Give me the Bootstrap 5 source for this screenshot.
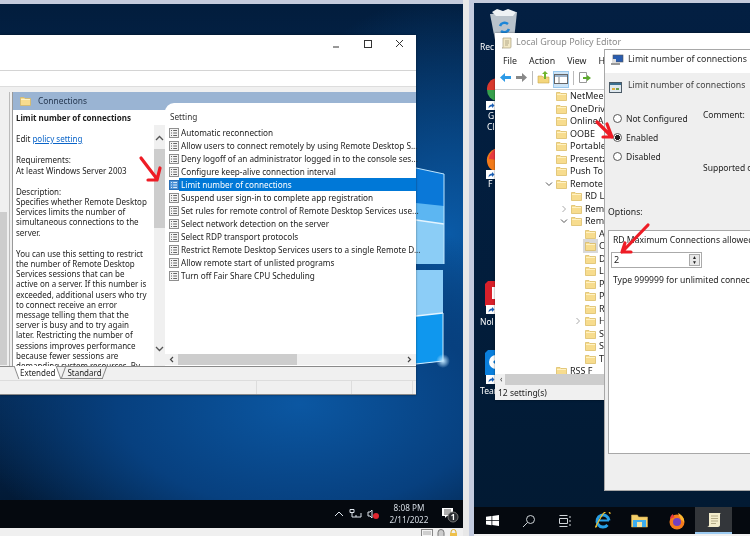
<!DOCTYPE html>
<html lang="en">
<head>
<meta charset="UTF-8">
<title>Limit number of connections</title>
<link href="https://cdn.jsdelivr.net/npm/bootstrap@5.3.0/dist/css/bootstrap.min.css" rel="stylesheet">
<style>
html, body { margin: 0; width: 750px; height: 536px; overflow: hidden; background: #f0f0f0; }
body { font-family: "Noto Sans", "Liberation Sans", sans-serif; font-size: 8px; line-height: 10.2px; color: #222; }
.screen { width: 750px; height: 536px; overflow: hidden; filter: blur(.4px); }
.top-strip { height: 4px; background: #c4cbdc; }
.desk { top: 4px; height: 496px; overflow: hidden; }
.desk-left { left: 0; width: 463px; background: radial-gradient(ellipse 330px 190px at 300px 400px, #0b57a2 0%, #07407f 55%, transparent 100%), radial-gradient(ellipse 200px 240px at 450px 230px, #0a5aa6 0%, transparent 100%), linear-gradient(#021d3d, #052e5e 45%, #052c59 75%, #021a36); }
.desk-right { left: 474px; width: 276px; top: 3px; height: 504px; background: linear-gradient(#031f42, #021d3b 60%, #021a33); }
.gap-a { left: 463px; top: 0; width: 6px; height: 536px; background: #e8e8e8; }
.gap-b { left: 469px; top: 0; width: 5px; height: 536px; background: #c3cbdf; }
.logo { left: 416px; top: 160px; }
.win { background: #fff; box-shadow: 0 0 2px rgba(0,0,0,.5); }
.win-left { left: 0; top: 35px; width: 416px; height: 360px; }
.title-bar { flex: none; height: 36px; padding: 3px 13px 0 0; border-bottom: 1px solid #d4d4d4; }
.addr { flex: none; height: 16px; border-bottom: 1px solid #ddd; }
.work { flex: 1 1 0; background: #f0f0f0; padding-top: 5px; min-height: 0; }
.tree-stub { width: 10px; background: #f0f0f0; border-right: 1px solid #bbb; color: #555; font-size: 7px; padding-top: 4px; }
.tree-stub .thumb { width: 7px; height: 153px; margin-top: 116px; background: #cdcdcd; }
.panel { width: 404px; margin-left: 2px; border-left: 1px solid #999; min-height: 0; background: #fff; }
.panel-head { flex: none; height: 18px; background: #9ab4d3; padding: 4px 0 0 7px; color: #24364e; font-size: 8.4px; gap: 7px; }
.panel-body { flex: 1 1 0; min-height: 0; }
.desc { width: 141px; flex: none; padding: 3px 0 0 3px; overflow: hidden; white-space: nowrap; color: #1c1c1c; }
.desc p { margin: 0 0 11px; }
.desc a { color: #0a64c8; }
.vscroll { width: 11px; flex: none; background: #f0f0f0; margin-top: 15px; position: relative; }
.vscroll .thumb { height: 79px; background: #cdcdcd; margin-top: 24px; }
.vscroll svg { position: absolute; left: 1px; }
.settings { flex: 1; margin-top: -7px; border-top-left-radius: 9px; background: #fff; padding: 9px 0 0 4px; min-width: 0; position: relative; font-size: 8.2px; }
.settings .hd { padding-left: 1px; height: 14px; color: #333; }
.set-row { height: 13px; line-height: 13px; white-space: nowrap; }
.set-row svg { flex: none; }
.set-row span { flex: 1; padding-left: 2px; }
.set-row.active span { background: #0078d7; color: #fff; }
.hscroll { height: 11px; background: #f0f0f0; position: absolute; left: 0; right: 0; top: 251px; }
.hscroll .thumb { width: 119px; height: 100%; background: #cdcdcd; margin-left: 13px; }
.hscroll svg { position: absolute; top: 2px; }
.tabs { flex: none; height: 14px; background: #f0f0f0; border-top: 1px solid #8a8a8a; padding-left: 16px; gap: 4px; }
.tab { position: relative; padding: 1px 4px 0; z-index: 0; height: 12px; }
.tab::before { content: ""; position: absolute; inset: -1px 0 0; z-index: -1; border: 1px solid #888; border-width: 0 1px 1px; transform: skewX(-20deg); }
.tab.first::before { transform: skewX(20deg); border-bottom: 0; background: #fff; }
.status { flex: none; height: 15px; background: #f0f0f0; border-top: 1px solid #ddd; border-bottom: 1px solid #8a8a8a; }
.status i { border-right: 1px solid #ddd; display: block; }
.taskbar { background: #05090f; }
.taskbar-left { left: 0; top: 500px; width: 463px; height: 28px; color: #dfe6ee; }
.tray { font-size: 8.2px; line-height: 12.5px; text-align: center; color: #d6dde5; width: 42px; margin: 0 11px 0 7px; }
.strip-icons { left: 421px; top: 529px; gap: 4px; }
.taskbar-right { left: 474px; top: 507px; width: 276px; height: 27px; }
.tb-btn { width: 37px; height: 27px; flex: none; }
.tb-start { width: 36px; }
.tb-active { background: #33363a; border-bottom: 2px solid #9ccaf0; }
.dicon { color: #fff; font-size: 8.5px; line-height: 10px; white-space: nowrap; }
.win-gpe { left: 495px; top: 33px; width: 255px; height: 367px; background: #fff; }
.gpe-title { flex: none; height: 20px; padding: 4px 0 0 6px; gap: 4px; color: #8b8b8b; font-size: 9px; white-space: nowrap; }
.gpe-menu { flex: none; height: 16px; padding-left: 8px; gap: 12px; font-size: 8.8px; color: #222; white-space: nowrap; }
.gpe-tools { flex: none; height: 21px; padding: 2px 0 0 4px; gap: 3px; border-bottom: 1px solid #d0d0d0; }
.tool-sep { width: 1px; height: 14px; background: #bbb; margin: 0 1px; }
.tool-on { background: #cce4f7; border: 1px solid #99c9ef; height: 17px; }
.tree { flex: 1 1 0; overflow: hidden; }
.tree-row { height: 12.5px; line-height: 12.5px; font-size: 9px; white-space: nowrap; gap: 3px; }
.tree-row svg { flex: none; }
.tree-row.sel svg.f { background: #d9d9d9; outline: 2px solid #d9d9d9; }
.l1 { padding-left: 61px; } .l2 { padding-left: 76px; } .l3 { padding-left: 90px; }
.chev { width: 8px; margin-left: -11px; }
.gpe-scroll { flex: none; height: 11px; background: #f0f0f0; color: #333; font-size: 8px; padding-left: 5px; }
.gpe-scroll .thumb { flex: 1; background: #cdcdcd; height: 100%; margin-left: 3px; }
.gpe-status { flex: none; height: 15px; padding: 3px 0 0 3px; background: #f0f0f0; font-size: 8.5px; }
.dlg { left: 604px; top: 49px; width: 150px; height: 442px; background: #efefef; border: 1px solid #a8a8a8; border-right: 0; font-size: 8.5px; white-space: nowrap; }
.dlg-title { flex: none; height: 23px; background: #fff; padding: 4px 0 0 6px; gap: 4px; color: #2b2b2b; font-size: 8.8px; }
.dlg-head { flex: none; height: 30px; padding: 8px 0 0 4px; gap: 6px; overflow: hidden; color: #444; font-size: 8.7px; }
.dlg-head span { margin-top: -1px; }
.dlg-cols { flex: none; height: 96px; padding: 10px 0 0 7px; }
.radio-col { width: 91px; flex: none; }
.form-check { min-height: 0; padding: 0 0 0 14px; margin: 0 0 8px; line-height: 11px; }
.form-check-input { width: 9px; height: 9px; margin: 1px 0 0 -13px; border: 1px solid #555; background-color: #fff; }
.form-check-input:checked { background-color: #fff; border-color: #555; background-image: radial-gradient(circle, #222 0 2.4px, transparent 2.6px); }
.comment { margin-top: -3px; }
.supported { margin-top: 43px; }
.opt-label { flex: none; padding: 8px 0 0 3px; height: 31px; font-size: 8.7px; }
.opt-box { flex: none; margin-left: 3px; height: 224px; background: #fff; border: 1px solid #a8a8a8; border-right: 0; padding: 4px 0 0 4px; font-size: 8.6px; }
.spin-box { width: 91px; height: 16px; border: 1px solid #aaa; margin: 7px 0 7px -2px; padding-left: 2px; background: #fff; font-size: 9px; }
.spin-box .spin { width: 11px; height: 12px; background: #e8e8e8; border: 1px solid #aaa; margin-right: 1px; font-size: 5px; line-height: 5px; text-align: center; color: #222; }
.arrow { left: 0; top: 0; pointer-events: none; }
</style>
</head>
<body>
<svg width="0" height="0" class="position-absolute">
  <symbol id="row" viewBox="0 0 10 10"><rect x=".5" y=".5" width="9" height="9" fill="#f4f4f4" stroke="#8f8f8f"/><path d="M2 2.500h1M2 5h1M2 7.500h1M4.200 2.500h3.800M4.200 5h3.800M4.200 7.500h3.800" stroke="#555" stroke-width=".9"/></symbol>
  <symbol id="rowsel" viewBox="0 0 10 10"><rect x=".5" y=".5" width="9" height="9" fill="#4f94d8" stroke="#2b6eb4"/><path d="M2 2.500h1M2 5h1M2 7.500h1M4.200 2.500h3.800M4.200 5h3.800M4.200 7.500h3.800" stroke="#e8f2fb" stroke-width=".9"/></symbol>
  <symbol id="folder" viewBox="0 0 11 10"><path d="M.5 1.500h3.500l1 1h5.500v7h-10z" fill="#f7dc8e" stroke="#d9b75c" stroke-width=".7"/><path d="M1 3.500h9" stroke="#fff2c4"/></symbol>
  <symbol id="short" viewBox="0 0 10 9"><rect width="10" height="9" fill="#fff"/><path d="M2.500 7.500c0-3 1.500-4 3.500-4V2l2.500 2.500L6 7V5.500c-1.500 0-2.500.5-3.500 2z" fill="#1b5fb5"/></symbol>
</svg>

<div class="screen position-relative">
  <div class="top-strip"></div>

  <!-- left desktop -->
  <div class="desk desk-left position-absolute">
    <svg class="logo position-absolute" width="47" height="216" viewBox="0 0 47 216">
      <defs><radialGradient id="glow"><stop offset="0" stop-color="#bfe6ff"/><stop offset="1" stop-color="#bfe6ff" stop-opacity="0"/></radialGradient></defs>
      <path d="M0 4L28 10V100H0z" fill="#0a78d8"/>
      <path d="M0 39L28 42V100H0z" fill="#5cb6f2"/>
      <path d="M0 56L28 60V100H0z" fill="#8bcdf6"/>
      <path d="M0 56L28 60" stroke="#e4f4ff" stroke-width="1.500"/>
      <path d="M0 4L28 10V100" fill="none" stroke="#bfe6ff"/>
      <path d="M0 106H27V197L0 200z" fill="#8ccdf7"/>
      <path d="M0 152L27 149V197L0 200z" fill="#0f97ee"/>
      <path d="M0 152L27 149" stroke="#e4f4ff" stroke-width="1.500"/>
      <path d="M27 149V197L0 200" fill="none" stroke="#cfecff"/>
      <circle cx="27" cy="197" r="7" fill="url(#glow)"/>
    </svg>
  </div>

  <div class="win win-left position-absolute d-flex flex-column">
    <div class="title-bar d-flex justify-content-end">
      <svg width="80" height="14" viewBox="0 0 80 14"><path d="M10 9h6" stroke="#333"/><rect x="41.500" y="2.500" width="7" height="7" fill="none" stroke="#333"/><path d="M73 2l7 7M80 2l-7 7" stroke="#333"/></svg>
    </div>
    <div class="addr"></div>
    <div class="work d-flex">
      <div class="tree-stub"><div class="thumb"></div></div>
      <div class="panel d-flex flex-column">
        <div class="panel-head d-flex">
          <svg width="11" height="10"><use href="#folder"/></svg><span>Connections</span>
        </div>
        <div class="panel-body d-flex">
          <div class="desc">
            <p class="fw-bold">Limit number of connections</p>
            <p>Edit <a href="#">policy setting </a></p>
            <p>Requirements:<br>At least Windows Server 2003</p>
            <p>Description:<br>Specifies whether Remote Desktop<br>Services limits the number of<br>simultaneous connections to the<br>server.</p>
            <p>You can use this setting to restrict<br>the number of Remote Desktop<br>Services sessions that can be<br>active on a server. If this number is<br>exceeded, additional users who try<br>to connect receive an error<br>message telling them that the<br>server is busy and to try again<br>later. Restricting the number of<br>sessions improves performance<br>because fewer sessions are<br>demanding system resources. By</p>
          </div>
          <div class="vscroll">
            <svg style="top:10px" width="9" height="6" viewBox="0 0 9 6"><path d="M1 5l3.500-3.500L8 5" fill="none" stroke="#555" stroke-width="1.300"/></svg>
            <div class="thumb"></div>
            <svg style="top:221px" width="9" height="6" viewBox="0 0 9 6"><path d="M1 1l3.500 3.500L8 1" fill="none" stroke="#555" stroke-width="1.300"/></svg>
          </div>
          <div class="settings">
            <div class="hd">Setting</div>
            <div class="set-row d-flex align-items-center"><svg width="10" height="10"><use href="#row"/></svg><span>Automatic reconnection</span></div>
            <div class="set-row d-flex align-items-center"><svg width="10" height="10"><use href="#row"/></svg><span>Allow users to connect remotely by using Remote Desktop S...</span></div>
            <div class="set-row d-flex align-items-center"><svg width="10" height="10"><use href="#row"/></svg><span>Deny logoff of an administrator logged in to the console ses...</span></div>
            <div class="set-row d-flex align-items-center"><svg width="10" height="10"><use href="#row"/></svg><span>Configure keep-alive connection interval</span></div>
            <div class="set-row active d-flex align-items-center"><svg width="10" height="10"><use href="#rowsel"/></svg><span>Limit number of connections</span></div>
            <div class="set-row d-flex align-items-center"><svg width="10" height="10"><use href="#row"/></svg><span>Suspend user sign-in to complete app registration</span></div>
            <div class="set-row d-flex align-items-center"><svg width="10" height="10"><use href="#row"/></svg><span>Set rules for remote control of Remote Desktop Services use...</span></div>
            <div class="set-row d-flex align-items-center"><svg width="10" height="10"><use href="#row"/></svg><span>Select network detection on the server</span></div>
            <div class="set-row d-flex align-items-center"><svg width="10" height="10"><use href="#row"/></svg><span>Select RDP transport protocols</span></div>
            <div class="set-row d-flex align-items-center"><svg width="10" height="10"><use href="#row"/></svg><span>Restrict Remote Desktop Services users to a single Remote D...</span></div>
            <div class="set-row d-flex align-items-center"><svg width="10" height="10"><use href="#row"/></svg><span>Allow remote start of unlisted programs</span></div>
            <div class="set-row d-flex align-items-center"><svg width="10" height="10"><use href="#row"/></svg><span>Turn off Fair Share CPU Scheduling</span></div>
            <div class="hscroll d-flex">
              <svg style="left:4px" width="5" height="7" viewBox="0 0 5 7"><path d="M4 1L1.500 3.500 4 6" fill="none" stroke="#444" stroke-width="1.200"/></svg>
              <div class="thumb"></div>
              <svg style="right:4px" width="5" height="7" viewBox="0 0 5 7"><path d="M1 1l2.500 2.500L1 6" fill="none" stroke="#444" stroke-width="1.200"/></svg>
            </div>
          </div>
        </div>
      </div>
    </div>
    <div class="tabs d-flex">
      <span class="tab first">Extended</span><span class="tab">Standard</span>
    </div>
    <div class="status d-flex">
      <i style="width:257px"></i><i style="width:95px"></i><i style="width:61px"></i>
    </div>
  </div>

  <div class="taskbar taskbar-left position-absolute d-flex justify-content-end align-items-center">
    <svg width="46" height="12" viewBox="0 0 46 12"><path d="M0 8l4-4 4 4" fill="none" stroke="#dfe6ee"/><path d="M15 1.500h4v3h-4zM17 4.500V9h9M21 9v-2M26 9V5" fill="none" stroke="#dfe6ee"/><path d="M33 4h2l2-2v8l-2-2h-2z" fill="none" stroke="#dfe6ee"/><circle cx="41" cy="8" r="3" fill="#e0262e"/></svg>
    <div class="tray">8:08 PM<br>2/11/2022</div>
    <svg class="me-1" width="18" height="17" viewBox="0 0 18 17"><path d="M1 2h11v8H6l-2 2v-2H1z" fill="#fff"/><path d="M3 4h7M3 6h7M3 8h5" stroke="#333" stroke-width=".8"/><circle cx="12" cy="11" r="5" fill="#2c2f33" stroke="#777"/><text x="12" y="14" text-anchor="middle" font-size="8" font-weight="700" fill="#fff" font-family="Noto Sans, sans-serif">1</text></svg>
  </div>
  <div class="strip-icons position-absolute d-flex">
    <svg width="12" height="7" viewBox="0 0 12 7"><rect x=".5" y=".5" width="11" height="9" fill="#f4f4f4" stroke="#888"/><path d="M2 3h8M2 5h8" stroke="#aaa"/></svg>
    <svg width="8" height="7" viewBox="0 0 8 7"><rect x="1" y=".5" width="6" height="9" rx="3" fill="#ccc" stroke="#777"/></svg>
    <svg width="9" height="7" viewBox="0 0 9 7"><path d="M2 4V3a2.500 2.500 0 0 1 5 0v1" fill="none" stroke="#d8a92c"/><rect x="1" y="4" width="7" height="5" fill="#eec04a"/></svg>
  </div>

  <div class="gap-a position-absolute"></div>
  <div class="gap-b position-absolute"></div>

  <!-- right desktop -->
  <div class="desk desk-right position-absolute">
    <svg class="position-absolute" style="left:15px;top:5px" width="30" height="34" viewBox="0 0 30 34"><path d="M1 6l27-2-3 28H6z" fill="#b9c3cc"/><path d="M3 4l5-3 6 2 5-2 8 3-3 4H7z" fill="#eef2f5"/><path d="M11 18a5 5 0 0 1 8-2M20 21a5 5 0 0 1-8 2" fill="none" stroke="#1c86d8" stroke-width="2.500"/></svg>
    <div class="dicon position-absolute" style="left:6px;top:39px">Rec</div>
    <svg class="position-absolute" style="left:11px;top:75px" width="12" height="34" viewBox="0 0 12 34"><path d="M12 0A11 11 0 0 0 2 12h10z" fill="#d9392d"/><path d="M2 12a11 11 0 0 0 10 11V12z" fill="#37a04c"/><use href="#short" x="1" y="23" width="10" height="9"/></svg>
    <div class="dicon position-absolute" style="left:14px;top:108px">G</div>
    <div class="dicon position-absolute" style="left:13px;top:119px">Cl</div>
    <svg class="position-absolute" style="left:11px;top:145px" width="12" height="34" viewBox="0 0 12 34"><path d="M12 0C5 2 1 8 2 14c1 6 5 9 10 9z" fill="#f27a1a"/><path d="M12 0C8 2 4 6 4 11l8 1z" fill="#e93a3f"/><use href="#short" x="1" y="22" width="10" height="9"/></svg>
    <div class="dicon position-absolute" style="left:14px;top:176px">F</div>
    <svg class="position-absolute" style="left:11px;top:278px" width="12" height="36" viewBox="0 0 12 36"><path d="M12 0H3L0 3v22h12z" fill="#d8202a"/><rect x="7" y="6" width="5" height="12" fill="#fff"/><use href="#short" x="1" y="24" width="10" height="9"/></svg>
    <div class="dicon position-absolute" style="left:6px;top:314px">Nol</div>
    <svg class="position-absolute" style="left:11px;top:347px" width="12" height="36" viewBox="0 0 12 36"><path d="M12 0H3L0 3v22h12z" fill="#0a7fdc"/><circle cx="11" cy="12" r="7" fill="#fff"/><path d="M12 8l-4 4 4 4" fill="#0a7fdc"/><use href="#short" x="1" y="25" width="10" height="9"/></svg>
    <div class="dicon position-absolute" style="left:6px;top:383px">Tean</div>
  </div>

  <div class="win win-gpe position-absolute d-flex flex-column">
    <div class="gpe-title d-flex">
      <svg width="11" height="12" viewBox="0 0 11 12"><path d="M2 1h8v9c0 1-1 1-2 1H1c1 0 1-1 1-2z" fill="#f1e7c4" stroke="#a89e80" stroke-width=".7"/><path d="M4 4h4M4 6h4M4 8h3" stroke="#9a9072" stroke-width=".7"/></svg>
      <span>Local Group Policy Editor</span>
    </div>
    <div class="gpe-menu d-flex align-items-center"><span>File</span><span>Action</span><span>View</span><span>Help</span></div>
    <div class="gpe-tools d-flex align-items-start">
      <svg width="13" height="13" viewBox="0 0 13 13"><path d="M1 6.500L6 2v3h6v3H6v3z" fill="#2d9ae6"/></svg>
      <svg width="13" height="13" viewBox="0 0 13 13"><path d="M12 6.500L7 2v3H1v3h6v3z" fill="#888"/></svg>
      <span class="tool-sep"></span>
      <svg width="13" height="13" viewBox="0 0 13 13"><path d="M1 5h4l1 1h6v6H1z" fill="#f4d67c" stroke="#c9a84f" stroke-width=".6"/><path d="M7 8V3H5l3-3 3 3H9v5z" fill="#6fb52c"/></svg>
      <span class="tool-on d-flex"><svg width="14" height="13" viewBox="0 0 14 13"><rect x=".5" y="2.500" width="13" height="9" fill="#fff" stroke="#666"/><path d="M1 3h12v2H1z" fill="#9cb4cc"/><path d="M5 5v6" stroke="#888"/></svg></span>
      <span class="tool-sep"></span>
      <svg width="13" height="13" viewBox="0 0 13 13"><path d="M1.500 1.500h7v10h-7z" fill="#fff" stroke="#999"/><path d="M5 6h4V4l4 3-4 3V8H5z" fill="#5cab2c"/></svg>
    </div>
    <div class="tree">
      <div class="tree-row l1 d-flex align-items-center"><svg class="f" width="11" height="10"><use href="#folder"/></svg>NetMee</div>
      <div class="tree-row l1 d-flex align-items-center"><svg class="f" width="11" height="10"><use href="#folder"/></svg>OneDriv</div>
      <div class="tree-row l1 d-flex align-items-center"><svg class="f" width="11" height="10"><use href="#folder"/></svg>OnlineA</div>
      <div class="tree-row l1 d-flex align-items-center"><svg class="f" width="11" height="10"><use href="#folder"/></svg>OOBE</div>
      <div class="tree-row l1 d-flex align-items-center"><svg class="f" width="11" height="10"><use href="#folder"/></svg>Portable</div>
      <div class="tree-row l1 d-flex align-items-center"><svg class="f" width="11" height="10"><use href="#folder"/></svg>Presentz</div>
      <div class="tree-row l1 d-flex align-items-center"><svg class="f" width="11" height="10"><use href="#folder"/></svg>Push To</div>
      <div class="tree-row l1 d-flex align-items-center"><svg class="chev" width="8" height="8" viewBox="0 0 8 8"><path d="M1 2.500l3 3 3-3" fill="none" stroke="#555"/></svg><svg class="f" width="11" height="10"><use href="#folder"/></svg>Remote</div>
      <div class="tree-row l2 d-flex align-items-center"><svg class="f" width="11" height="10"><use href="#folder"/></svg>RD L</div>
      <div class="tree-row l2 d-flex align-items-center"><svg class="chev" width="8" height="8" viewBox="0 0 8 8"><path d="M2.500 1l3 3-3 3" fill="none" stroke="#aaa"/></svg><svg class="f" width="11" height="10"><use href="#folder"/></svg>Rem</div>
      <div class="tree-row l2 d-flex align-items-center"><svg class="chev" width="8" height="8" viewBox="0 0 8 8"><path d="M1 2.500l3 3 3-3" fill="none" stroke="#555"/></svg><svg class="f" width="11" height="10"><use href="#folder"/></svg>Rem</div>
      <div class="tree-row l3 d-flex align-items-center"><svg class="f" width="11" height="10"><use href="#folder"/></svg>A</div>
      <div class="tree-row sel l3 d-flex align-items-center"><svg class="f" width="11" height="10"><use href="#folder"/></svg>C</div>
      <div class="tree-row l3 d-flex align-items-center"><svg class="f" width="11" height="10"><use href="#folder"/></svg>D</div>
      <div class="tree-row l3 d-flex align-items-center"><svg class="f" width="11" height="10"><use href="#folder"/></svg>L</div>
      <div class="tree-row l3 d-flex align-items-center"><svg class="f" width="11" height="10"><use href="#folder"/></svg>P</div>
      <div class="tree-row l3 d-flex align-items-center"><svg class="f" width="11" height="10"><use href="#folder"/></svg>P</div>
      <div class="tree-row l3 d-flex align-items-center"><svg class="f" width="11" height="10"><use href="#folder"/></svg>R</div>
      <div class="tree-row l3 d-flex align-items-center"><svg class="chev" width="8" height="8" viewBox="0 0 8 8"><path d="M2.500 1l3 3-3 3" fill="none" stroke="#aaa"/></svg><svg class="f" width="11" height="10"><use href="#folder"/></svg>H</div>
      <div class="tree-row l3 d-flex align-items-center"><svg class="f" width="11" height="10"><use href="#folder"/></svg>S</div>
      <div class="tree-row l3 d-flex align-items-center"><svg class="f" width="11" height="10"><use href="#folder"/></svg>S</div>
      <div class="tree-row l3 d-flex align-items-center"><svg class="f" width="11" height="10"><use href="#folder"/></svg>T</div>
      <div class="tree-row l1 d-flex align-items-center"><svg class="f" width="11" height="10"><use href="#folder"/></svg>RSS F</div>
    </div>
    <div class="gpe-scroll d-flex align-items-center"><span>&lsaquo;</span><div class="thumb"></div></div>
    <div class="gpe-status">12 setting(s)</div>
  </div>

  <div class="dlg position-absolute d-flex flex-column">
    <div class="dlg-title d-flex">
      <svg width="13" height="12" viewBox="0 0 13 12"><rect x="2" y="1" width="10" height="7" fill="#2a5db0" stroke="#555" stroke-width=".6"/><path d="M0 9h9v2H0z" fill="#999"/><path d="M1 5h4v4H1z" fill="#ddd"/></svg>
      <span>Limit number of connections</span>
    </div>
    <div class="dlg-head d-flex">
      <svg width="13" height="13" viewBox="0 0 13 13"><rect x=".5" y="1.500" width="12" height="10" fill="#dfe8ee" stroke="#4b5a66"/><path d="M1 2h11v2H1z" fill="#3c6f8f"/><path d="M3 7h3v2H3z" fill="#e0b040"/><path d="M7 7h3v2H7z" fill="#6fa050"/></svg>
      <span>Limit number of connections</span>
    </div>
    <div class="dlg-cols d-flex">
      <div class="radio-col">
        <div class="form-check"><input class="form-check-input" type="radio" name="state" id="r1"><label class="form-check-label" for="r1">Not Configured</label></div>
        <div class="form-check"><input class="form-check-input" type="radio" name="state" id="r2" checked><label class="form-check-label" for="r2">Enabled</label></div>
        <div class="form-check"><input class="form-check-input" type="radio" name="state" id="r3"><label class="form-check-label" for="r3">Disabled</label></div>
      </div>
      <div class="d-flex flex-column">
        <span class="comment">Comment:</span>
        <span class="supported">Supported on:</span>
      </div>
    </div>
    <div class="opt-label">Options:</div>
    <div class="opt-box">
      <div>RD Maximum Connections allowed</div>
      <div class="spin-box d-flex align-items-center justify-content-between"><span>2</span><div class="spin">&#9650;<br>&#9660;</div></div>
      <div>Type 999999 for unlimited connections</div>
    </div>
  </div>

  <div class="taskbar taskbar-right position-absolute d-flex align-items-center">
    <div class="tb-btn tb-start d-flex align-items-center justify-content-center"><svg width="13" height="11" viewBox="0 0 13 11"><path d="M0 1.800L5.500 1v4.200H0zM6.300.9L13 0v5.200H6.300zM0 6h5.500v4.200L0 9.400zM6.300 6H13v5l-6.700-.9z" fill="#fff"/></svg></div>
    <div class="tb-btn d-flex align-items-center justify-content-center"><svg width="14" height="14" viewBox="0 0 14 14"><circle cx="8.500" cy="5.500" r="4" fill="none" stroke="#cfd4d8"/><path d="M5.500 8.500L1 13" stroke="#cfd4d8"/></svg></div>
    <div class="tb-btn d-flex align-items-center justify-content-center"><svg width="13" height="12" viewBox="0 0 13 12"><path d="M.5 3.500h8v5h-8zM.5 .5h8M.5 11.500h8M11 1v2M11 5v2M11 9v2" fill="none" stroke="#cfd4d8"/></svg></div>
    <div class="tb-btn d-flex align-items-center justify-content-center"><svg width="18" height="17" viewBox="0 0 18 17"><path d="M15 8.500a6 6 0 1 0-1.500 4.500" fill="none" stroke="#28a0e6" stroke-width="3"/><path d="M4 8.500h11" stroke="#28a0e6" stroke-width="2"/><path d="M3 14C0 17 2 14 7 5s9-5.500 9-3" fill="none" stroke="#f0c030" stroke-width="1.200"/></svg></div>
    <div class="tb-btn d-flex align-items-center justify-content-center"><svg width="17" height="14" viewBox="0 0 17 14"><path d="M.5 1h6l1 2h9v10H.5z" fill="#f4cf6a" stroke="#c9a34b" stroke-width=".6"/><path d="M2 6h13v7H2z" fill="#3dadee"/><path d="M6 8h5v5H6z" fill="#f4e3a2"/></svg></div>
    <div class="tb-btn d-flex align-items-center justify-content-center"><svg width="18" height="18" viewBox="0 0 18 18"><circle cx="9" cy="10" r="7.500" fill="#f47b1c"/><path d="M10 1c4 2 7 5 6 10-.5-2-2-3-3-3-1-3-2-4-3-7z" fill="#fbb731"/><path d="M2 7c0-2 1-4 3-5 0 2 1 3 2 3z" fill="#e93a3f"/><circle cx="9" cy="10" r="4" fill="#7340c0"/></svg></div>
    <div class="tb-btn tb-active d-flex align-items-center justify-content-center"><svg width="16" height="15" viewBox="0 0 16 15"><path d="M3 1h12c-1 0-1 1-1 2v10c0 1-1 2-2 2H1c1 0 2-1 2-2z" fill="#f3eccb"/><path d="M5 4h7M5 6.500h7M5 9h7M5 11.500h5" stroke="#b5ac88"/></svg></div>
  </div>

  <svg class="arrow position-absolute" width="750" height="536" viewBox="0 0 750 536">
    <g fill="none" stroke="#ee1c25" stroke-width="3.200" stroke-linecap="round" stroke-linejoin="round">
      <path d="M141 158L157 179M148 180H157L160 168"/>
      <path d="M597 122L612 137M607 124L612 137L603 137"/>
      <path d="M648 225L622 252M625 243L622 252L631 252"/>
    </g>
  </svg>
</div>
<script src="https://cdn.jsdelivr.net/npm/bootstrap@5.3.0/dist/js/bootstrap.bundle.min.js"></script>
</body>
</html>
